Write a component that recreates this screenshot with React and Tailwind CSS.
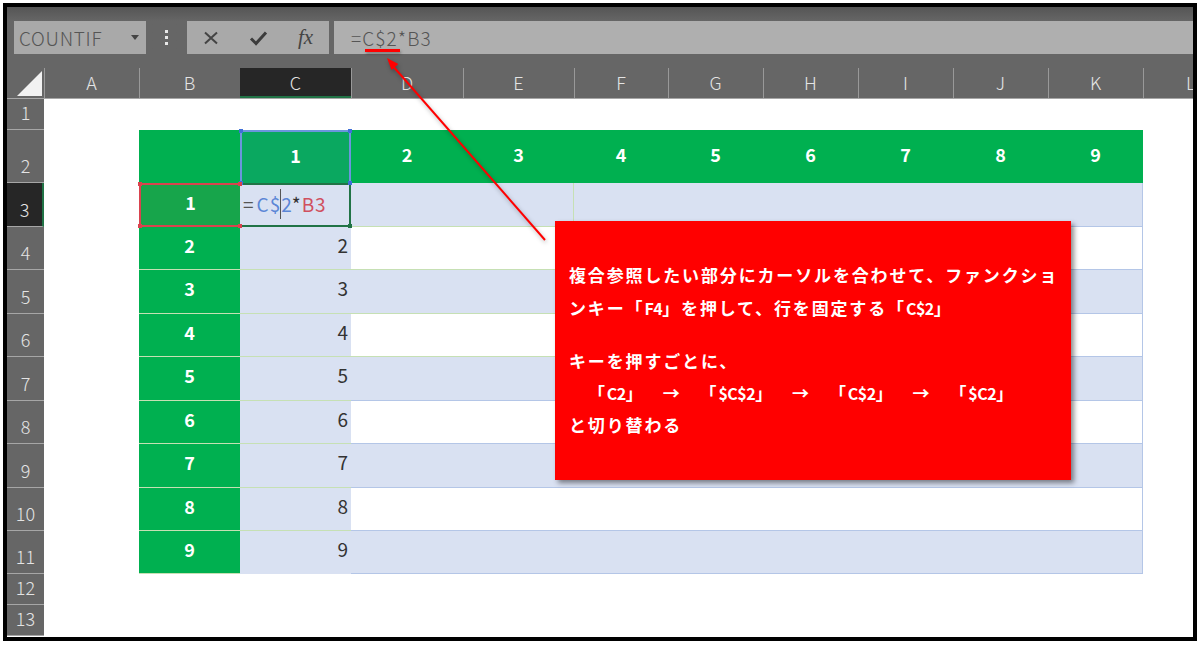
import { Fragment } from "react";

const columns = ["A", "B", "C", "D", "E", "F", "G", "H", "I", "J", "K"];

const bodyRows = [
    { row: 4, n: 2, band: false, line: "border-[#c6e0b4]" },
    { row: 5, n: 3, band: true, line: "border-[#c6e0b4]" },
    { row: 6, n: 4, band: false, line: "border-[#c6e0b4]" },
    { row: 7, n: 5, band: true, line: "border-[#b4c6e7]" },
    { row: 8, n: 6, band: false, line: "border-[#b4c6e7]" },
    { row: 9, n: 7, band: true, line: "border-[#b4c6e7]" },
    { row: 10, n: 8, band: false, line: "border-[#b4c6e7]" },
    { row: 11, n: 9, band: true, line: "border-[#b4c6e7]" },
];

function RowHead({ n, active }) {
    return (
        <div
            className={
                "flex items-end justify-center pb-[4px] text-[18px] font-light leading-[26px] border-b border-[#a6a6a6] text-[#e4e4e4] " +
                (active ? "bg-[#262626] border-r-2 border-r-[#217346]" : "bg-[#666666]")
            }
        >
            {n}
        </div>
    );
}

function Handle({ className }) {
    return <span className={"absolute z-10 h-[4px] w-[4px] " + className} />;
}

function ToolbarButtons() {
    return (
        <div className="ml-[19px] flex h-[33px] w-[142px] items-center bg-[#a9a9a9]">
            <svg className="ml-[16px]" width="16" height="16" viewBox="0 0 16 16">
                <path d="M2 2.5 L14 13.5 M14 2.5 L2 13.5" stroke="#444" strokeWidth="2" fill="none" />
            </svg>
            <svg className="ml-[30px]" width="19" height="16" viewBox="0 0 19 16">
                <path d="M2 8.5 L7 13.5 L17 2.5" stroke="#3c3c3c" strokeWidth="3" fill="none" />
            </svg>
            <span className="ml-[30px] font-['Liberation_Serif',serif] text-[21px] italic leading-none text-[#444]">fx</span>
        </div>
    );
}

export default function App() {
    return (
        <div className="h-[646px] w-[1200px] overflow-hidden bg-white font-['Noto_Sans_CJK_JP',sans-serif]">
            <div className="relative ml-[3px] mt-[3px] h-[638px] w-[1194px] overflow-hidden border-4 border-black bg-white">
                {/* formula bar */}
                <div className="flex h-[47px] items-start bg-gradient-to-b from-[#555555] to-[#666666] to-30% pl-[7px] pt-[14px]">
                    <div className="flex h-[33px] w-[132px] items-center justify-between bg-[#a9a9a9] pl-[5px] pr-[4px]">
                        <span className="text-[19px] font-light leading-none tracking-[0.7px] text-[#555555]">COUNTIF</span>
                        <span className="mr-[3px] h-0 w-0 border-x-[4.5px] border-t-[5px] border-x-transparent border-t-[#444444]" />
                    </div>
                    <div className="ml-[19px] flex h-[33px] flex-col items-center justify-center gap-[3px]">
                        <span className="h-[3px] w-[3px] bg-[#e8e8e8]" />
                        <span className="h-[3px] w-[3px] bg-[#e8e8e8]" />
                        <span className="h-[3px] w-[3px] bg-[#e8e8e8]" />
                    </div>
                    <ToolbarButtons />
                    <div className="ml-[5px] flex h-[33px] flex-1 items-center bg-[#afafaf] pl-[17px] text-[19px] font-light leading-none tracking-[1.1px] text-[#555555]">
                        =C$2*B3
                    </div>
                </div>

                {/* sheet */}
                <div className="grid h-[583px] grid-cols-[37px_95px_101px_111px_112px_111px_94px_95px_95px_95px_95px_95px_50px] grid-rows-[45px_31px_53px_44px_43px_44px_43px_44px_43px_44px_43px_43px_31px_31px]">
                    {/* column headers */}
                    <div className="relative border-b border-[#a6a6a6] bg-[#666666]">
                        <div className="absolute bottom-[2px] right-[2px] h-0 w-0 border-b-[25px] border-l-[25px] border-b-[#f2f2f2] border-l-transparent" />
                    </div>
                    {columns.map((c) => (
                        <div key={c} className="border-b border-[#a6a6a6] bg-[#666666] pt-[14px]">
                            {c === "C" ? (
                                <div className="flex h-[30px] items-center justify-center border-b-2 border-[#217346] bg-[#262626] pb-[1px] text-[18px] font-light leading-none text-[#e4e4e4]">
                                    C
                                </div>
                            ) : (
                                <div className="flex h-[30px] items-center justify-center border-l border-[#999999] pb-[2px] pr-[1px] text-[18px] font-light leading-none text-[#e4e4e4]">
                                    {c}
                                </div>
                            )}
                        </div>
                    ))}
                    <div className="border-b border-[#a6a6a6] bg-[#666666] pt-[14px]">
                        <div className="flex h-[30px] items-center border-l border-[#999999] pb-[2px] pl-[42px] text-[18px] font-light leading-none text-[#e4e4e4]">
                            L
                        </div>
                    </div>

                    {/* row 1 */}
                    <RowHead n={1} />
                    <div className="col-span-12" />

                    {/* row 2: table header */}
                    <RowHead n={2} />
                    <div />
                    <div className="bg-[#00b050]" />
                    <div className="relative flex items-center justify-center border-2 border-b-0 border-[#6c95dd] bg-[#0aa860] pb-[4px] text-[18px] font-bold text-white">
                        1
                        <Handle className="-left-[3px] -top-[3px] bg-[#3f6fd8]" />
                        <Handle className="-right-[3px] -top-[3px] bg-[#3f6fd8]" />
                        <Handle className="-bottom-[2px] -left-[3px] bg-[#3f6fd8]" />
                        <Handle className="-bottom-[2px] -right-[3px] bg-[#3f6fd8]" />
                    </div>
                    {[2, 3, 4, 5, 6, 7, 8, 9].map((n) => (
                        <div key={n} className="flex items-center justify-center bg-[#00b050] pb-[4px] text-[18px] font-bold text-white">
                            {n}
                        </div>
                    ))}
                    <div />

                    {/* row 3: editing row */}
                    <RowHead n={3} active />
                    <div />
                    <div className="relative flex items-center justify-center border-2 border-r-0 border-[#d9434e] bg-[#17a54b] pb-[5px] text-[18px] font-bold text-white">
                        1
                        <Handle className="-left-[3px] -top-[3px] bg-[#d9434e]" />
                        <Handle className="-right-[2px] -top-[3px] bg-[#d9434e]" />
                        <Handle className="-bottom-[3px] -left-[3px] bg-[#d9434e]" />
                        <Handle className="-bottom-[3px] -right-[2px] bg-[#d9434e]" />
                    </div>
                    <div className="relative flex items-center border-2 border-l-0 border-[#217346] bg-[#d9e1f2] pb-[3px] pl-[3px] text-[19px] leading-none tracking-[1px]">
                        <span className="mr-[2px] text-[#555555]">=</span>
                        <span className="text-[#5b86d6]">C$</span>
                        <span className="-ml-[1px] inline-block h-[30px] w-px bg-[#555555]" />
                        <span className="text-[#5b86d6]">2</span>
                        <span className="-ml-[1px] text-[#333333]">*</span>
                        <span className="text-[#d0505f]">B3</span>
                        <Handle className="-bottom-[3px] -right-[3px] bg-[#217346]" />
                    </div>
                    <div className="col-span-2 border-b border-r border-[#c6e0b4] bg-[#d9e1f2]" />
                    <div className="col-span-6 border-b border-r border-[#b4c6e7] bg-[#d9e1f2]" />
                    <div />

                    {/* rows 4 to 11 */}
                    {bodyRows.map((r) => (
                        <Fragment key={r.row}>
                            <RowHead n={r.row} />
                            <div />
                            <div className="flex items-center justify-center border-b border-[#c6e0b4] bg-[#00b050] pb-[6px] text-[18px] font-bold text-white">
                                {r.n}
                            </div>
                            <div
                                className={
                                    "flex items-center justify-end bg-[#d9e1f2] pb-[6px] pr-[3px] text-[19px] text-[#333333] " +
                                    (r.row === 11 ? "" : "border-b border-[#c6e0b4]")
                                }
                            >
                                {r.n}
                            </div>
                            <div className={"col-span-2 border-b " + r.line + " " + (r.band ? "bg-[#d9e1f2]" : "bg-white")} />
                            <div className={"col-span-6 border-b border-r border-[#b4c6e7] " + (r.band ? "bg-[#d9e1f2]" : "bg-white")} />
                            <div />
                        </Fragment>
                    ))}

                    {/* rows 12, 13 */}
                    <RowHead n={12} />
                    <div className="col-span-12" />
                    <RowHead n={13} />
                    <div className="col-span-12" />
                </div>

                {/* annotation: underline + arrow */}
                <div className="absolute left-[358px] top-[42px] h-[3px] w-[35px] bg-[#ff0000] shadow-[1px_2px_3px_rgba(0,0,0,0.3)]" />
                <svg className="absolute left-[373px] top-[49px] drop-shadow-[1px_2px_2px_rgba(0,0,0,0.3)]" width="170" height="190" viewBox="0 0 170 190">
                    <path d="M165 184 L12 9" stroke="#ff0000" strokeWidth="2" fill="none" />
                    <path d="M7 2 L18.3 8.1 L11.5 14 Z" fill="#ff0000" />
                </svg>

                {/* annotation: red note */}
                <div className="absolute left-[548px] top-[214px] h-[259px] w-[516px] whitespace-nowrap bg-[#ff0000] pl-[14px] pt-[38px] text-[17px] font-bold leading-[32.5px] tracking-[1.85px] text-white shadow-[3px_3px_5px_rgba(0,0,0,0.45)]">
                    <p>複合参照したい部分にカーソルを合わせて、ファンクショ</p>
                    <p>
                        ンキー「<span className="text-[16px] tracking-[-0.5px]">F4</span>」を押して、行を固定する「<span className="text-[16px] tracking-[-0.5px]">C$2</span>」
                    </p>
                    <p className="mt-[21px] leading-[31.5px]">キーを押すごとに、</p>
                    <div className="flex items-center leading-[31.5px]">
                        <span className="ml-[19px]">「<span className="text-[16px] tracking-[-0.5px]">C2</span>」</span>
                        <span className="ml-[18px]">→</span>
                        <span className="ml-[18px]">「<span className="text-[16px] tracking-[-0.5px]">$C$2</span>」</span>
                        <span className="ml-[18px]">→</span>
                        <span className="ml-[18px]">「<span className="text-[16px] tracking-[-0.5px]">C$2</span>」</span>
                        <span className="ml-[18px]">→</span>
                        <span className="ml-[18px]">「<span className="text-[16px] tracking-[-0.5px]">$C2</span>」</span>
                    </div>
                    <p className="leading-[31.5px]">と切り替わる</p>
                </div>
            </div>
        </div>
    );
}
